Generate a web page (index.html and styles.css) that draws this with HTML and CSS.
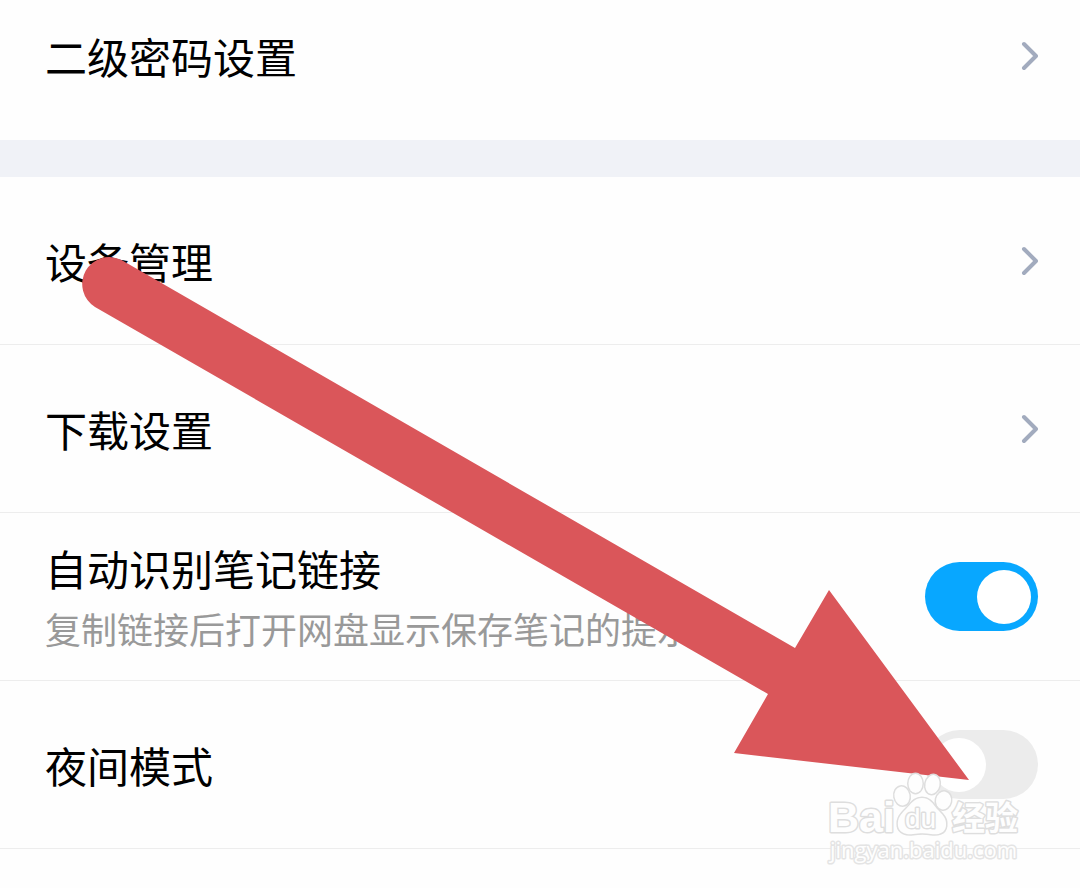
FILE: index.html
```html
<!DOCTYPE html>
<html lang="zh-CN">
<head>
    <meta charset="UTF-8">
    <meta name="viewport" content="width=device-width, initial-scale=1.0">
    <title>设置</title>
    <link rel="stylesheet" href="styles.css">
</head>
<body>

<main class="settings">
    <!-- Security -->
    <section class="group group-top">
        <a class="row" href="#password">
            <span class="title">二级密码设置</span>
            <svg class="chevron" viewBox="0 0 18 30"><path d="M4 3 L16 15 L4 27"/></svg>
        </a>
    </section>

    <!-- General -->
    <section class="group">
        <a class="row" href="#devices">
            <span class="title">设备管理</span>
            <svg class="chevron" viewBox="0 0 18 30"><path d="M4 3 L16 15 L4 27"/></svg>
        </a>
        <a class="row" href="#download">
            <span class="title">下载设置</span>
            <svg class="chevron" viewBox="0 0 18 30"><path d="M4 3 L16 15 L4 27"/></svg>
        </a>
        <div class="row">
            <label class="text" for="note-link">
                <span class="title">自动识别笔记链接</span>
                <span class="hint">复制链接后打开网盘显示保存笔记的提示</span>
            </label>
            <input class="switch" type="checkbox" id="note-link" checked>
        </div>
        <div class="row">
            <label class="title" for="night-mode">夜间模式</label>
            <input class="switch" type="checkbox" id="night-mode">
        </div>
    </section>
</main>

<!-- Arrow pointing at the night mode switch -->
<svg class="arrow" viewBox="80 256 890 526" aria-hidden="true">
    <path d="M121.5 260 L795 648 L829 590 L969 780 L734 753 L768 694 L95 307 A27 27 0 0 1 121.5 260 Z"/>
</svg>

<!-- Watermark -->
<svg class="watermark" viewBox="0 0 204 96">
    <g class="paw">
        <ellipse cx="76" cy="24" rx="7.500" ry="9.500" transform="rotate(-10 76 24)"/>
        <ellipse cx="89.500" cy="11.500" rx="7" ry="9.500"/>
        <ellipse cx="106.500" cy="12.500" rx="7" ry="9.500" transform="rotate(12 106.500 12.500)"/>
        <ellipse cx="117.500" cy="28.500" rx="7.500" ry="9" transform="rotate(12 117.500 28.500)"/>
        <path d="M96 26 C104 26 107 32 111 37 C116 42 121 46 120 54 C119 62 111 63 105 62 C99 61 94 61 87 62 C81 63 73 61 72 54 C71 46 75 42 80 37 C85 32 88 26 96 26 Z"/>
    </g>
    <text class="brand" x="2" y="60">Bai</text>
    <text class="du" x="79" y="56">du</text>
    <text class="brand-cn" x="126" y="58">经验</text>
    <text class="site" x="4" y="86">jingyan.baidu.com</text>
</svg>

</body>
</html>
```
FILE: styles.css
```css
* {
    box-sizing: border-box;
}

body {
    margin: 0;
    position: relative;
    min-height: 100vh;
    background-color: #fefefe;
    color: #000;
    font-family: "Noto Sans CJK SC", sans-serif;
}

/* Setting groups */
.group-top {
    padding-bottom: 28px;
    border-bottom: 37px solid #f0f2f7;
}

.group-top .row {
    height: 112px;
    border-bottom: none;
}

.row {
    display: flex;
    align-items: center;
    justify-content: space-between;
    height: 168px;
    padding: 0 42px 0 45px;
    border-bottom: 1px solid #ededed;
    color: inherit;
    text-decoration: none;
}

.text {
    display: flex;
    flex-direction: column;
    padding-top: 3px;
}

.title {
    font-size: 42px;
    line-height: 60px;
}

.hint {
    font-size: 36px;
    line-height: 60px;
    color: #999;
}

.chevron {
    width: 18px;
    height: 30px;
    fill: none;
    stroke: #a2abbe;
    stroke-width: 4;
    stroke-linecap: round;
    stroke-linejoin: round;
}

/* Switches */
.switch {
    appearance: none;
    display: flex;
    align-items: center;
    flex: none;
    width: 113px;
    height: 69px;
    margin: 0;
    padding: 0 7px;
    border-radius: 35px;
    background-color: #ececec;
    cursor: pointer;
}

.switch::before {
    content: "";
    width: 54px;
    height: 54px;
    border-radius: 50%;
    background-color: #fff;
}

.switch:checked {
    justify-content: flex-end;
    background-color: #08a7ff;
}

/* Arrow */
.arrow {
    position: absolute;
    left: 80px;
    top: 256px;
    width: 890px;
    height: 526px;
    fill: #da565a;
    pointer-events: none;
}

/* Watermark */
.watermark {
    position: absolute;
    left: 826px;
    top: 772px;
    width: 204px;
    height: 96px;
    fill: #fefefe;
    stroke: #dedede;
    stroke-width: 3;
    stroke-linejoin: round;
    paint-order: stroke;
    pointer-events: none;
}

.brand {
    font: bold 43px "Liberation Sans", Arial, sans-serif;
}

.du {
    font: 28px "Liberation Sans", Arial, sans-serif;
}

.brand-cn {
    font: bold 33px "Noto Sans CJK SC", sans-serif;
}

.site {
    font: 22px "Open Sans", sans-serif;
    stroke: #e4e4e4;
}
```
